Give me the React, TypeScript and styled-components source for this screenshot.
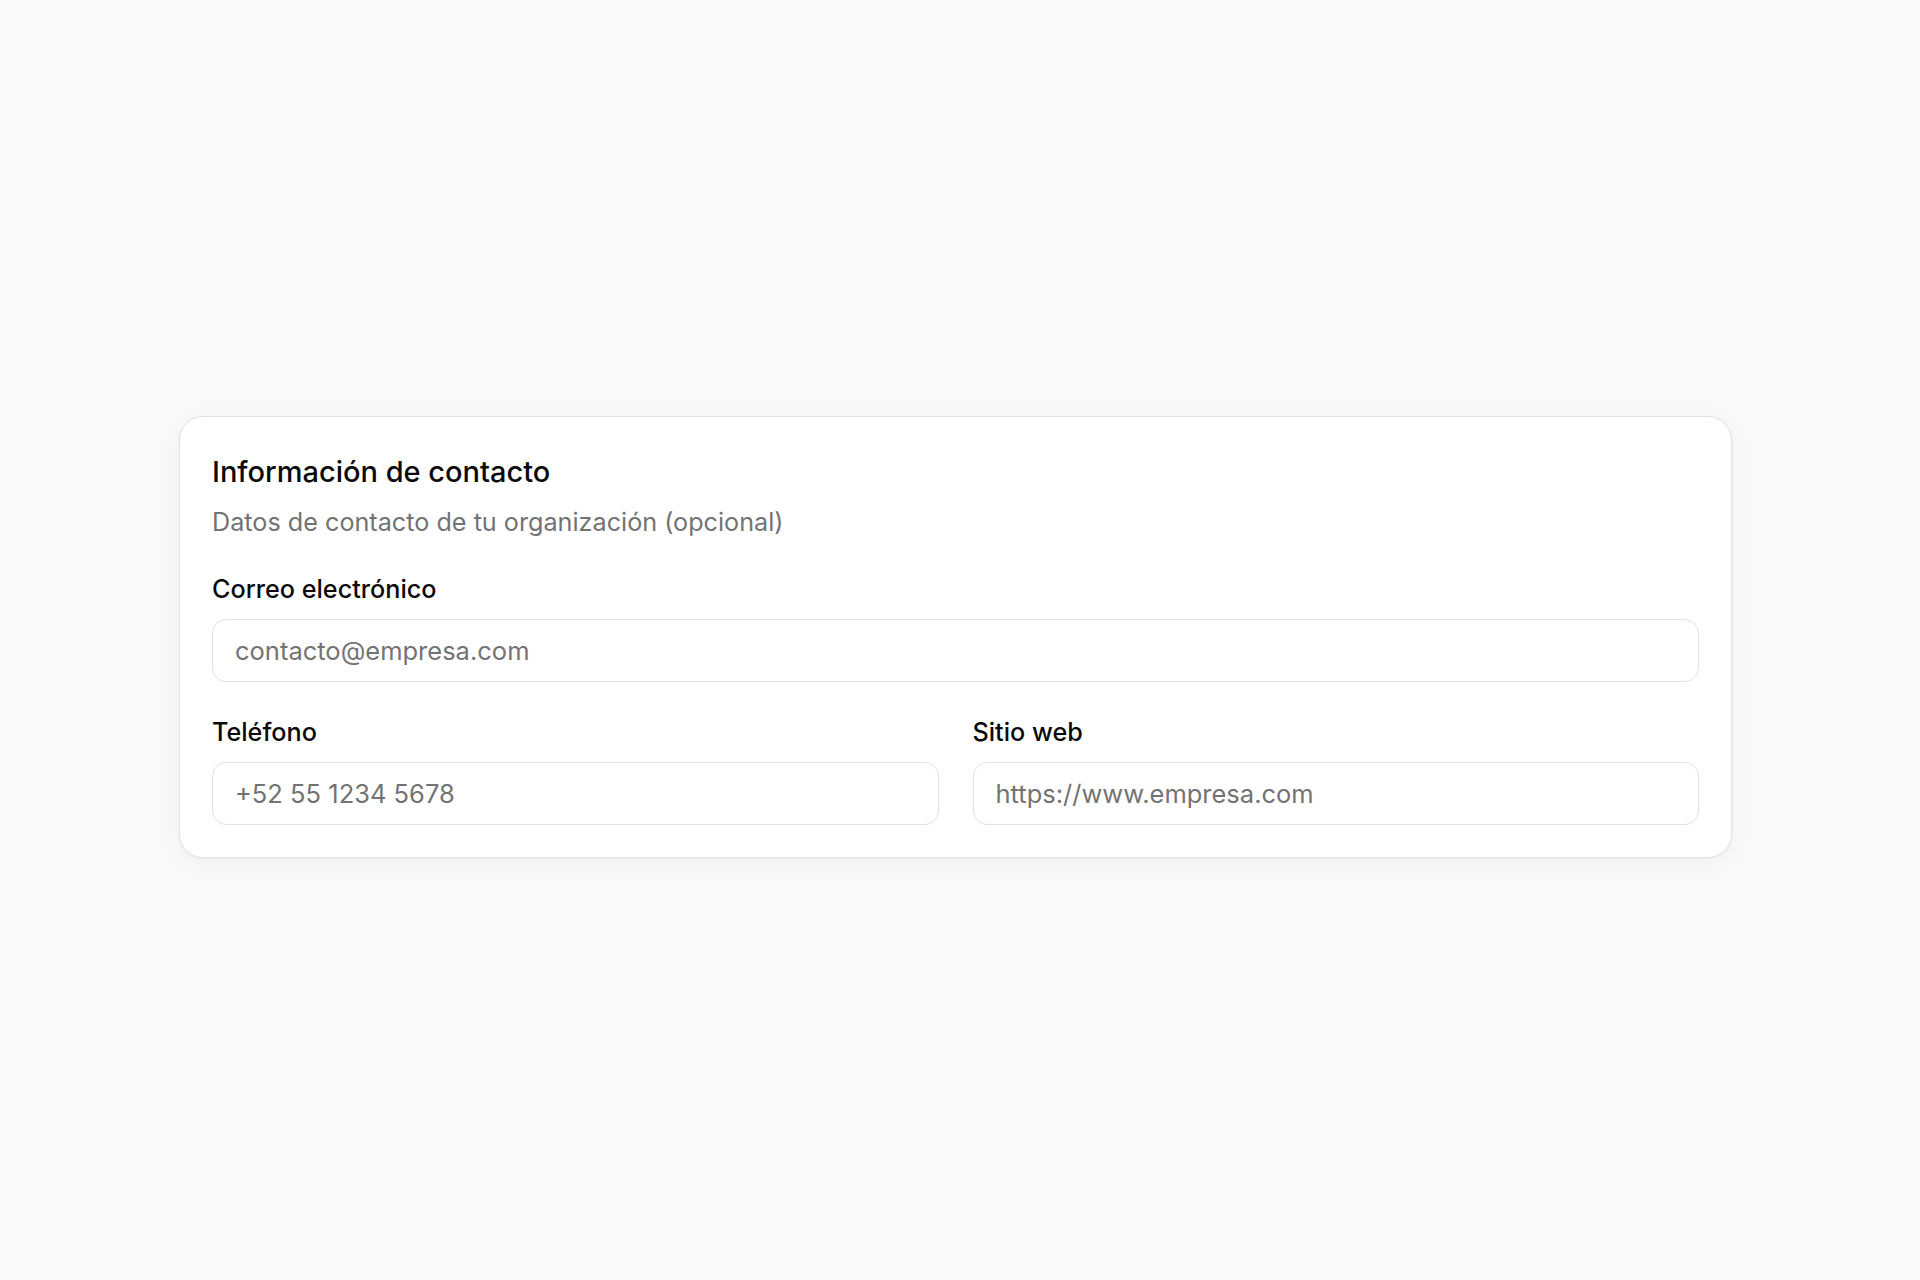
import styled, { createGlobalStyle } from "styled-components";

const GlobalStyle = createGlobalStyle`
  * {
    box-sizing: border-box;
  }

  body {
    margin: 0;
    background: #f9f9f9;
    font-family: Inter, "Noto Sans", "Liberation Sans", sans-serif;
    color: #0a0a0a;
  }
`;

type FieldProps = {
  label: string;
  placeholder: string;
  type?: string;
};

const Field = ({ label, placeholder, type = "text" }: FieldProps) => {
  return (
    <FieldBox>
      <Label>{label}</Label>
      <Input type={type} placeholder={placeholder} />
    </FieldBox>
  );
};

export default function App() {
  return (
    <>
      <GlobalStyle />
      <Page>
        <Card>
          <Header>
            <Title>Información de contacto</Title>
            <Subtitle>Datos de contacto de tu organización (opcional)</Subtitle>
          </Header>
          <Fields>
            <Field
              label="Correo electrónico"
              placeholder="contacto@empresa.com"
              type="email"
            />
            <Row>
              <Field label="Teléfono" placeholder="+52 55 1234 5678" type="tel" />
              <Field
                label="Sitio web"
                placeholder="https://www.empresa.com"
                type="url"
              />
            </Row>
          </Fields>
        </Card>
      </Page>
    </>
  );
}

const Page = styled.div`
  min-height: 100vh;
  padding: 0 9px 7px 0;
  display: flex;
  align-items: center;
  justify-content: center;
`;

const Card = styled.section`
  width: 1553px;
  background: #ffffff;
  border: 1px solid #e2e2e2;
  border-radius: 24px;
  padding: 37px 32px 32px;
  box-shadow: 0 4px 24px rgba(0, 0, 0, 0.04), 0 1px 3px rgba(0, 0, 0, 0.03);
  display: flex;
  flex-direction: column;
  gap: 32px;
`;

const Header = styled.div`
  display: flex;
  flex-direction: column;
  gap: 15px;
`;

const Title = styled.h2`
  margin: 0;
  font-size: 29px;
  line-height: 36px;
  font-weight: 500;
  color: #0a0a0a;
`;

const Subtitle = styled.p`
  margin: 0;
  font-size: 25.2px;
  line-height: 34px;
  font-weight: 400;
  color: #737373;
`;

const Fields = styled.div`
  display: flex;
  flex-direction: column;
  gap: 32px;
`;

const Row = styled.div`
  display: grid;
  grid-template-columns: 1fr 1fr;
  gap: 34px;
`;

const FieldBox = styled.div`
  display: flex;
  flex-direction: column;
  gap: 12px;
`;

const Label = styled.label`
  font-size: 25.2px;
  line-height: 36px;
  font-weight: 500;
  color: #0a0a0a;
`;

const Input = styled.input`
  width: 100%;
  height: 63px;
  padding: 0 22px;
  border: 1.5px solid #e2e2e2;
  border-radius: 14px;
  background: #ffffff;
  font-family: inherit;
  font-size: 25.5px;
  color: #0a0a0a;
  outline: none;

  &::placeholder {
    color: #737373;
  }
`;
